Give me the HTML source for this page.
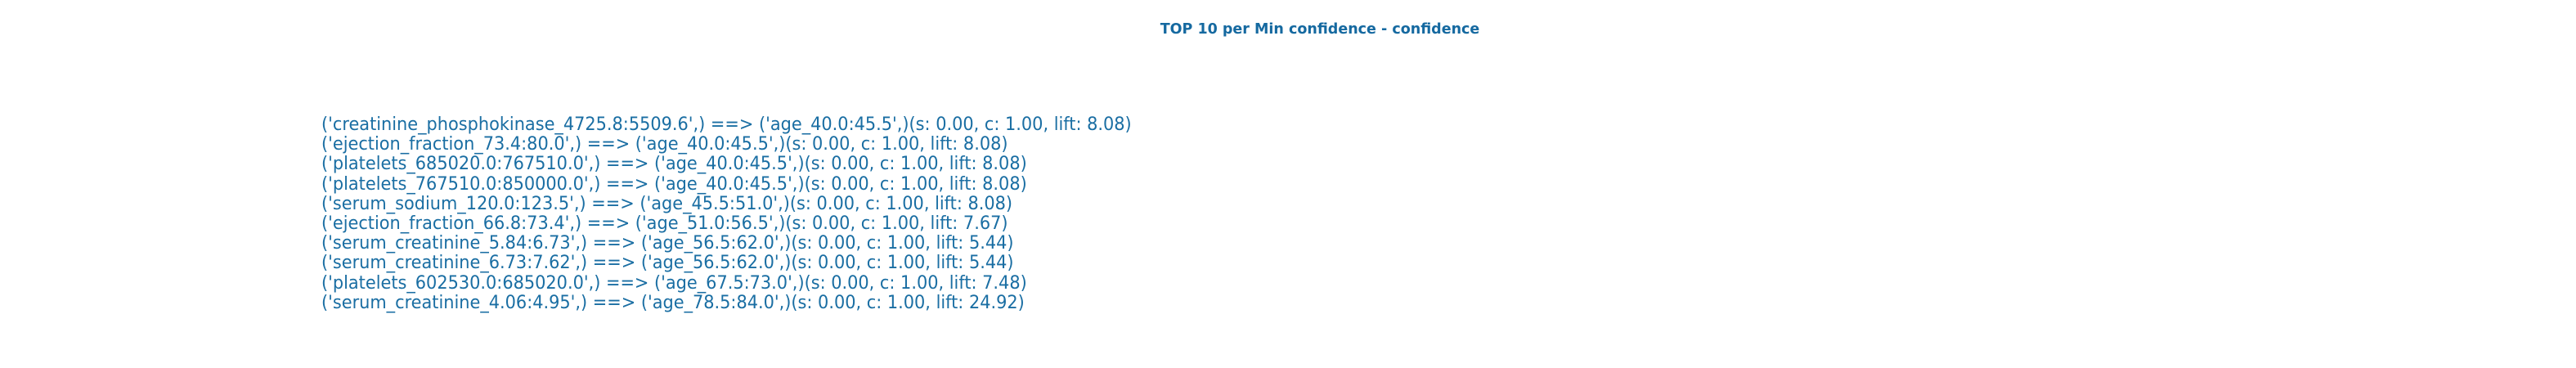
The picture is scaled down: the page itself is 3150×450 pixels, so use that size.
<!DOCTYPE html>
<html><head><meta charset="utf-8"><style>
body{margin:0;width:3150px;height:450px;background:#fff;position:relative;overflow:hidden;font-family:"DejaVu Sans","Liberation Sans",sans-serif;}
.t{position:absolute;left:0;width:3228px;top:26px;text-align:center;font-weight:bold;font-size:17.5px;color:#1569a0;}
.l{position:absolute;left:393px;top:141px;font-size:22px;line-height:24.2px;color:#1a6ea3;white-space:pre;transform:scaleX(0.948);transform-origin:0 0;}
</style></head><body>
<div class="t">TOP 10 per Min confidence - confidence</div>
<div class="l">('creatinine_phosphokinase_4725.8:5509.6',) ==&gt; ('age_40.0:45.5',)(s: 0.00, c: 1.00, lift: 8.08)
('ejection_fraction_73.4:80.0',) ==&gt; ('age_40.0:45.5',)(s: 0.00, c: 1.00, lift: 8.08)
('platelets_685020.0:767510.0',) ==&gt; ('age_40.0:45.5',)(s: 0.00, c: 1.00, lift: 8.08)
('platelets_767510.0:850000.0',) ==&gt; ('age_40.0:45.5',)(s: 0.00, c: 1.00, lift: 8.08)
('serum_sodium_120.0:123.5',) ==&gt; ('age_45.5:51.0',)(s: 0.00, c: 1.00, lift: 8.08)
('ejection_fraction_66.8:73.4',) ==&gt; ('age_51.0:56.5',)(s: 0.00, c: 1.00, lift: 7.67)
('serum_creatinine_5.84:6.73',) ==&gt; ('age_56.5:62.0',)(s: 0.00, c: 1.00, lift: 5.44)
('serum_creatinine_6.73:7.62',) ==&gt; ('age_56.5:62.0',)(s: 0.00, c: 1.00, lift: 5.44)
('platelets_602530.0:685020.0',) ==&gt; ('age_67.5:73.0',)(s: 0.00, c: 1.00, lift: 7.48)
('serum_creatinine_4.06:4.95',) ==&gt; ('age_78.5:84.0',)(s: 0.00, c: 1.00, lift: 24.92)</div>
</body></html>
